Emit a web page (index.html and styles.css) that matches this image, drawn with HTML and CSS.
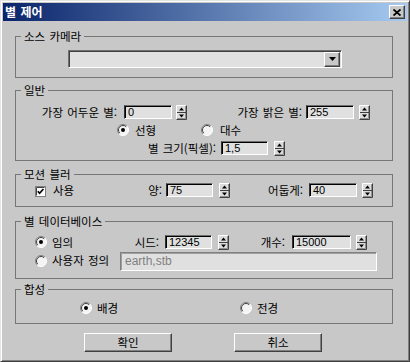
FILE: index.html
```html
<!DOCTYPE html>
<html lang="ko">
<head>
<meta charset="utf-8">
<title>별 제어</title>
<link rel="stylesheet" href="styles.css">
</head>
<body>
<div class="window">
  <div class="titlebar">
    <span class="title">별 제어</span>
    <button class="close" aria-label="닫기">
      <svg width="8" height="7" viewBox="0 0 8 7"><path d="M0.5,0.5 L7.5,6.5 M7.5,0.5 L0.5,6.5" stroke="#000" stroke-width="1.8" fill="none"/></svg>
    </button>
  </div>
  <div class="content">
    <div class="group g1">
      <div class="legend">소스 카메라</div>
      <div class="combo">
        <div class="combo-field"></div>
        <div class="combo-btn">
          <svg width="7" height="4" viewBox="0 0 7 4"><polygon points="0,0 7,0 3.5,4" fill="#000"/></svg>
        </div>
      </div>
    </div>

    <div class="group g2">
      <div class="legend">일반</div>
      <div class="row r15 mt14">
        <div class="lbl w101">가장 어두운 별:</div>
        <div class="field w48 ml7">0</div>
        <svg class="spin ml4" width="11" height="15" viewBox="0 0 11 15"><use href="#sp"/></svg>
        <div class="lbl w115">가장 밝은 별:</div>
        <div class="field w48 ml4">255</div>
        <svg class="spin ml5" width="11" height="15" viewBox="0 0 11 15"><use href="#sp"/></svg>
      </div>
      <div class="row r12 mt4">
        <svg class="radio ml101" width="12" height="12" viewBox="0 0 12 12"><use href="#rad"/><circle cx="6" cy="6" r="2" fill="#000"/></svg>
        <div class="opt ml6 w66">선형</div>
        <svg class="radio" width="12" height="12" viewBox="0 0 12 12"><use href="#rad"/></svg>
        <div class="opt ml7">대수</div>
      </div>
      <div class="row r15 mt5">
        <div class="lbl w200">별 크기(픽셀):</div>
        <div class="field w47 ml5">1,5</div>
        <svg class="spin ml6" width="11" height="15" viewBox="0 0 11 15"><use href="#sp"/></svg>
      </div>
    </div>

    <div class="group g3">
      <div class="legend">모션 블러</div>
      <div class="row r15 mt8">
        <svg class="check ml19" width="11" height="11" viewBox="0 0 11 11">
          <rect x="0.5" y="0.5" width="10" height="10" fill="#fff" stroke="#808080"/>
          <path d="M1.5,1.5 V9.5 M1.5,1.5 H9.5" stroke="#404040" fill="none"/>
          <polyline points="2.8,5.2 4.6,7.2 8.4,3" fill="none" stroke="#000" stroke-width="1.7"/>
        </svg>
        <div class="opt ml7 w60">사용</div>
        <div class="lbl w49">양:</div>
        <div class="field w47 ml4">75</div>
        <svg class="spin ml6" width="11" height="15" viewBox="0 0 11 15"><use href="#sp"/></svg>
        <div class="lbl w73">어둡게:</div>
        <div class="field w48 ml6">40</div>
        <svg class="spin ml5" width="11" height="15" viewBox="0 0 11 15"><use href="#sp"/></svg>
      </div>
    </div>

    <div class="group g4">
      <div class="legend">별 데이터베이스</div>
      <div class="row r16 mt13">
        <svg class="radio ml19 rt1" width="12" height="12" viewBox="0 0 12 12"><use href="#rad"/><circle cx="6" cy="6" r="2" fill="#000"/></svg>
        <div class="opt ml5 w59">임의</div>
        <div class="lbl w48">시드:</div>
        <div class="field w47 ml6">12345</div>
        <svg class="spin ml6" width="11" height="15" viewBox="0 0 11 15"><use href="#sp"/></svg>
        <div class="lbl w56">개수:</div>
        <div class="field w59 ml7">15000</div>
        <svg class="spin ml5" width="11" height="15" viewBox="0 0 11 15"><use href="#sp"/></svg>
      </div>
      <div class="row r19 mt1">
        <svg class="radio ml19 rt3" width="12" height="12" viewBox="0 0 12 12"><use href="#rad"/></svg>
        <div class="opt ml5 w68 lh17">사용자 정의</div>
        <div class="wide">earth,stb</div>
      </div>
    </div>

    <div class="group g5">
      <div class="legend">합성</div>
      <div class="row r12 mt12">
        <svg class="radio ml64" width="12" height="12" viewBox="0 0 12 12"><use href="#rad"/><circle cx="6" cy="6" r="2" fill="#000"/></svg>
        <div class="opt ml5 w143">배경</div>
        <svg class="radio" width="12" height="12" viewBox="0 0 12 12"><use href="#rad"/></svg>
        <div class="opt ml5">전경</div>
      </div>
    </div>

    <div class="buttons">
      <button class="btn">확인</button>
      <button class="btn">취소</button>
    </div>
  </div>
</div>

<svg class="defs" width="0" height="0" aria-hidden="true">
  <defs>
    <g id="sp">
      <rect width="11" height="15" fill="#dcdcdc"/>
      <path d="M0.5,14 V0.5 H10" stroke="#fff" fill="none"/>
      <path d="M0.5,14.5 H10.5 V0.5" stroke="#404040" fill="none"/>
      <path d="M1,13.5 H9.5 V1" stroke="#909090" fill="none"/>
      <line x1="1" y1="7.5" x2="10" y2="7.5" stroke="#404040"/>
      <polygon points="3,5.5 8,5.5 5.5,2.5" fill="#000"/>
      <polygon points="3,9.5 8,9.5 5.5,12.5" fill="#000"/>
    </g>
    <g id="rad">
      <circle cx="6" cy="6" r="5.5" fill="#f4f4f4"/>
      <path d="M2.1,9.9 A5.5,5.5 0 0 1 9.9,2.1" fill="none" stroke="#808080"/>
      <path d="M2.8,9.2 A4.5,4.5 0 0 1 9.2,2.8" fill="none" stroke="#404040"/>
      <path d="M2.1,9.9 A5.5,5.5 0 0 0 9.9,2.1" fill="none" stroke="#ffffff"/>
    </g>
  </defs>
</svg>
</body>
</html>
```

FILE: styles.css
```css
* { box-sizing: border-box; }

body {
  margin: 0;
  background: #c8c8c8;
  font-family: "Noto Sans CJK KR", "Noto Sans", sans-serif;
  font-size: 11.5px;
  word-spacing: 1px;
  color: #000;
}

.defs { position: absolute; width: 0; height: 0; overflow: hidden; }

.window {
  width: 410px;
  height: 362px;
  border: 1px solid;
  border-color: #e4e4e4 #404040 #404040 #e4e4e4;
  box-shadow: inset 1px 1px #ffffff, inset -1px -1px #808080;
  padding: 2px;
  background: #c8c8c8;
}

.titlebar {
  height: 18px;
  display: flex;
  align-items: center;
  justify-content: space-between;
  padding: 0 2px 0 2px;
  background: linear-gradient(to right, #0a246a, #a6caf0);
}

.title {
  color: #fff;
  font-weight: bold;
  font-size: 12px;
  line-height: 14px;
}

.close {
  width: 16px;
  height: 14px;
  padding: 0;
  background: #c8c8c8;
  border: 1px solid;
  border-color: #ffffff #404040 #404040 #ffffff;
  box-shadow: inset -1px -1px #808080;
  display: flex;
  align-items: center;
  justify-content: center;
}

.content { display: flex; flex-direction: column; }

.group {
  margin-left: 12px;
  width: 378px;
  border: 1px solid #777777;
  display: flex;
  flex-direction: column;
  align-items: flex-start;
}
.g1 { margin-top: 15px; height: 42px; }
.g2 { margin-top: 12px; height: 71px; }
.g3 { margin-top: 13px; height: 33px; }
.g4 { margin-top: 14px; height: 58px; }
.g5 { margin-top: 10px; height: 35px; }

.legend {
  margin: -8px 0 -6px 5px;
  padding: 0 3px;
  height: 14px;
  line-height: 14px;
  background: #c8c8c8;
  white-space: nowrap;
}

.combo {
  margin: 13px 0 0 52px;
  width: 274px;
  height: 18px;
  display: flex;
  align-items: center;
  justify-content: flex-end;
  padding: 1px;
  background: #e0e0e0;
  border: 1px solid;
  border-color: #707070 #ffffff #ffffff #707070;
  box-shadow: inset 1px 1px #404040;
}
.combo-field { flex: 1; }
.combo-btn {
  width: 16px;
  height: 15px;
  background: #c8c8c8;
  border: 1px solid;
  border-color: #ffffff #404040 #404040 #ffffff;
  box-shadow: inset -1px -1px #808080;
  display: flex;
  align-items: center;
  justify-content: center;
}

.row { display: flex; align-items: flex-start; white-space: nowrap; }
.r12 { height: 12px; line-height: 12px; }
.r15 { height: 15px; line-height: 15px; }
.r16 { height: 16px; line-height: 15px; }
.r19 { height: 19px; line-height: 17px; }

.lbl { text-align: right; flex: none; }
.opt { flex: none; }
.lh17 { line-height: 17px; }

.field {
  flex: none;
  height: 14px;
  padding-left: 3px;
  background: #e0e0e0;
  border: 1px solid;
  border-color: #707070 #ffffff #ffffff #303030;
  box-shadow: inset 1px 1px #000000;
  font-family: "Liberation Sans", Arial, sans-serif;
  font-size: 11px;
  line-height: 12px;
  word-spacing: 0;
}

.wide {
  flex: none;
  width: 257px;
  height: 19px;
  padding-left: 4px;
  background: #e0e0e0;
  border: 1px solid;
  border-color: #808080 #ffffff #ffffff #808080;
  box-shadow: inset 1px 1px #a0a0a0;
  color: #808080;
  font-family: "Liberation Sans", Arial, sans-serif;
  font-size: 12px;
  line-height: 16px;
  word-spacing: 0;
}

.spin, .radio, .check { flex: none; display: block; }
.check { margin-top: 3px; }
.rt1 { margin-top: 1px; }
.rt3 { margin-top: 3px; }

.buttons {
  display: flex;
  gap: 62px;
  margin: 9px 0 0 81px;
}
.btn {
  width: 88px;
  height: 19px;
  padding: 0;
  background: #c8c8c8;
  border: 1px solid;
  border-color: #ffffff #404040 #404040 #ffffff;
  box-shadow: inset -1px -1px #808080;
  font-family: "Noto Sans CJK KR", "Noto Sans", sans-serif;
  font-size: 11.5px;
  line-height: 15px;
  color: #000;
}

.mt1 { margin-top: 1px; }
.mt4 { margin-top: 4px; }
.mt5 { margin-top: 5px; }
.mt8 { margin-top: 8px; }
.mt12 { margin-top: 12px; }
.mt13 { margin-top: 13px; }
.mt14 { margin-top: 14px; }

.ml4 { margin-left: 4px; }
.ml5 { margin-left: 5px; }
.ml6 { margin-left: 6px; }
.ml7 { margin-left: 7px; }
.ml19 { margin-left: 19px; }
.ml64 { margin-left: 64px; }
.ml101 { margin-left: 101px; }

.w47 { width: 47px; }
.w48 { width: 48px; }
.w49 { width: 49px; }
.w56 { width: 56px; }
.w59 { width: 59px; }
.w60 { width: 60px; }
.w66 { width: 66px; }
.w68 { width: 68px; }
.w73 { width: 73px; }
.w101 { width: 101px; }
.w115 { width: 115px; }
.w143 { width: 143px; }
.w200 { width: 200px; }
```
